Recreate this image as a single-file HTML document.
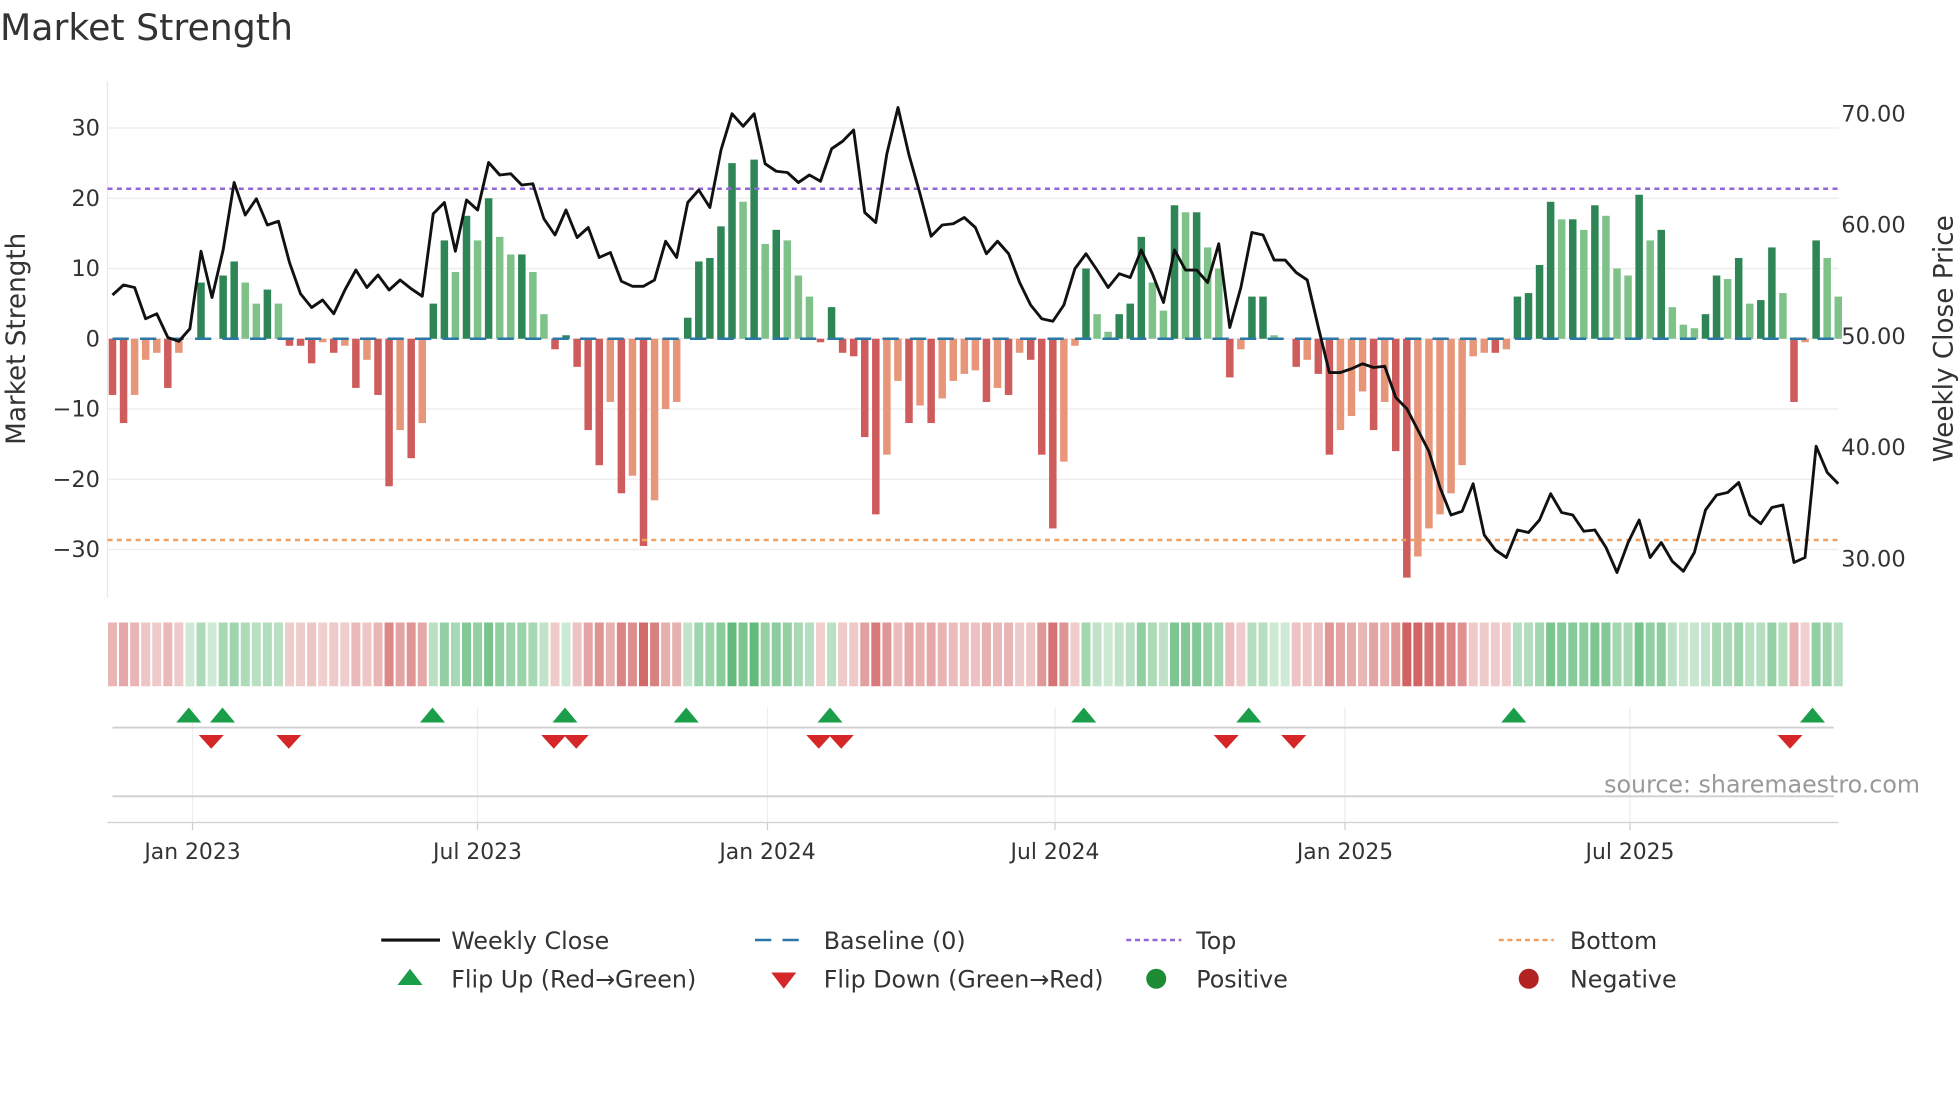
<!DOCTYPE html>
<html><head><meta charset="utf-8"><style>
html,body{margin:0;padding:0;background:#fff;width:1960px;height:1102px;overflow:hidden}
svg{display:block}
text{font-family:"DejaVu Sans","Liberation Sans",sans-serif;fill:#333}
</style></head><body>
<svg id="s" width="1960" height="1102" viewBox="0 0 1568 881.6" xmlns="http://www.w3.org/2000/svg">
<text x="0" y="32" font-size="29">Market Strength</text>
<g id="grid"></g>
<g id="bars"></g>
<g id="heat"></g>
<g id="lines"></g>
<g id="marks"></g>
<text x="1536" y="634" font-size="19" text-anchor="end" style="fill:#999">source: sharemaestro.com</text>
<g font-size="19">
<line x1="305" y1="752" x2="352" y2="752" stroke="#111" stroke-width="2.5"/>
<text x="361" y="759">Weekly Close</text>
<line x1="604" y1="752" x2="646" y2="752" stroke="#2a77a8" stroke-width="2" stroke-dasharray="13,9"/>
<text x="659" y="759">Baseline (0)</text>
<line x1="901" y1="752" x2="945" y2="752" stroke="#9467d8" stroke-width="2" stroke-dasharray="4,3"/>
<text x="957" y="759">Top</text>
<line x1="1199" y1="752" x2="1243" y2="752" stroke="#f0a060" stroke-width="2" stroke-dasharray="4,3"/>
<text x="1256" y="759">Bottom</text>
<polygon points="318,788 338,788 328,775" fill="#1a9e4a"/>
<text x="361" y="790">Flip Up (Red→Green)</text>
<polygon points="617,778 637,778 627,791" fill="#d62728"/>
<text x="659" y="790">Flip Down (Green→Red)</text>
<circle cx="925" cy="783" r="8" fill="#1e8c34"/>
<text x="957" y="790">Positive</text>
<circle cx="1223" cy="783" r="8" fill="#b22222"/>
<text x="1256" y="790">Negative</text>
</g>
</svg>
<script>
var V=[-8,-12,-8,-3,-2,-7,-2,0,8,0,9,11,8,5,7,5,-1,-1,-3.5,-0.5,-2,-1,-7,-3,-8,-21,-13,-17,-12,5,14,9.5,17.5,14,20,14.5,12,12,9.5,3.5,-1.5,0.5,-4,-13,-18,-9,-22,-19.5,-29.5,-23,-10,-9,3,11,11.5,16,25,19.5,25.5,13.5,15.5,14,9,6,-0.5,4.5,-2,-2.5,-14,-25,-16.5,-6,-12,-9.5,-12,-8.5,-6,-5,-4.5,-9,-7,-8,-2,-3,-16.5,-27,-17.5,-1,10,3.5,1,3.5,5,14.5,8,4,19,18,18,13,10,-5.5,-1.5,6,6,0.5,0,-4,-3,-5,-16.5,-13,-11,-7.5,-13,-9,-16,-34,-31,-27,-25,-22,-18,-2.5,-2,-2,-1.5,6,6.5,10.5,19.5,17,17,15.5,19,17.5,10,9,20.5,14,15.5,4.5,2,1.5,3.5,9,8.5,11.5,5,5.5,13,6.5,-9,-0.5,14,11.5,6];
var P=[236,228,230,255,251,270,273,263,201,238,200,146,172,159,180,177,210,235,246,240,251,232,216,230,220,232,224,231,237,171,162,201,160,168,130,140,139,148,147,175,188,168,190,182,206,202,225,229,229,224,193,206,162,152,166,120,91,101,91,131,137,138,146,140,145,119,113,104,170,178,123,86,124,155,189,180,179,174,182,203,193,203,226,244,255,257,244,215,203,216,230,219,222,200,219,242,200,216,216,226,195,262,230,186,188,208,208,218,224,262,298,298,295,291,294,293,318,327,344,361,390,412,409,387,428,440,446,424,426,416,395,410,412,425,424,438,458,434,416,446,434,449,457,442,408,396,394,386,412,419,406,404,450,446,357,378,387];
var NS="http://www.w3.org/2000/svg";
function el(p,t,a,txt){var e=document.createElementNS(NS,t);for(var k in a)e.setAttribute(k,a[k]);if(txt!=null)e.textContent=txt;document.getElementById(p).appendChild(e);return e;}
function y0(v){return 271-v*5.62;}
[30,20,10,0,-10,-20,-30].forEach(function(v){var y=y0(v);el("grid","line",{x1:86,x2:1471,y1:y,y2:y,stroke:"#ececec","stroke-width":1});el("grid","text",{x:80,y:y+6,"font-size":18,"text-anchor":"end"},(v<0?"\u2212":"")+Math.abs(v));});
[70,60,50,40,30].forEach(function(v,i){var y=91+i*89;el("grid","text",{x:1473,y:y+6,"font-size":18},v.toFixed(2));});
el("grid","line",{x1:86,x2:86,y1:65,y2:478,stroke:"#e8e8e8"});
el("grid","text",{x:0,y:0,"font-size":21,"text-anchor":"middle",transform:"translate(20,271) rotate(-90)"},"Market Strength");
el("grid","text",{x:0,y:0,"font-size":21,"text-anchor":"middle",transform:"translate(1562,271) rotate(-90)"},"Weekly Close Price");
var mx=[154,382,614,844,1076,1304],ml=["Jan 2023","Jul 2023","Jan 2024","Jul 2024","Jan 2025","Jul 2025"];
mx.forEach(function(x,i){el("grid","line",{x1:x,x2:x,y1:566,y2:658,stroke:"#eee"});el("grid","line",{x1:x,x2:x,y1:658,y2:664,stroke:"#ccc"});el("grid","text",{x:x,y:687,"font-size":17.5,"text-anchor":"middle"},ml[i]);});
el("grid","line",{x1:90,x2:1467,y1:582,y2:582,stroke:"#d0d0d0","stroke-width":1.5});
el("grid","line",{x1:90,x2:1467,y1:637,y2:637,stroke:"#d0d0d0","stroke-width":1.5});
el("grid","line",{x1:86,x2:1471,y1:658,y2:658,stroke:"#d0d0d0","stroke-width":1});
var step=8.85;
V.forEach(function(v,i){var x=90+i*step;var prev=i?V[i-1]:0;var c;
 if(v>=0)c=(v>=prev)?"#2e8656":"#7ec28a";else c=(v<=prev)?"#cf5c5c":"#e8967a";
 if(Math.abs(v)>0.05){var y=y0(v);el("bars","rect",{x:x-3,y:Math.min(y,271),width:6,height:Math.abs(271-y),fill:c});}
 var hc=v>=0?"rgba(60,170,90,"+(0.25+0.55*Math.min(1,v/25))+")":"rgba(200,70,70,"+(0.25+0.6*Math.min(1,-v/32))+")";
 el("heat","rect",{x:x-3.6,y:498,width:7.2,height:51,fill:hc});
});
el("lines","line",{x1:90,x2:1467,y1:271,y2:271,stroke:"#2a77a8","stroke-width":2,"stroke-dasharray":"13,9"});
el("lines","line",{x1:86,x2:1471,y1:151,y2:151,stroke:"#9467d8","stroke-width":2,"stroke-dasharray":"4,3.5"});
el("lines","line",{x1:86,x2:1471,y1:432,y2:432,stroke:"#f0a060","stroke-width":2,"stroke-dasharray":"4,3.5"});
var d=P.map(function(y,i){return (i?"L":"M")+(90+i*step).toFixed(1)+" "+y;}).join(" ");
el("lines","path",{d:d,fill:"none",stroke:"#111","stroke-width":2.3,"stroke-linejoin":"round"});
[151,178,346,452,549,664,867,999,1211,1450].forEach(function(x){el("marks","polygon",{points:(x-10)+",578 "+(x+10)+",578 "+x+",566",fill:"#1a9e4a"});});
[169,231,443,461,655,673,981,1035,1432].forEach(function(x){el("marks","polygon",{points:(x-10)+",588 "+(x+10)+",588 "+x+",599",fill:"#d62728"});});
</script>
</body></html>
